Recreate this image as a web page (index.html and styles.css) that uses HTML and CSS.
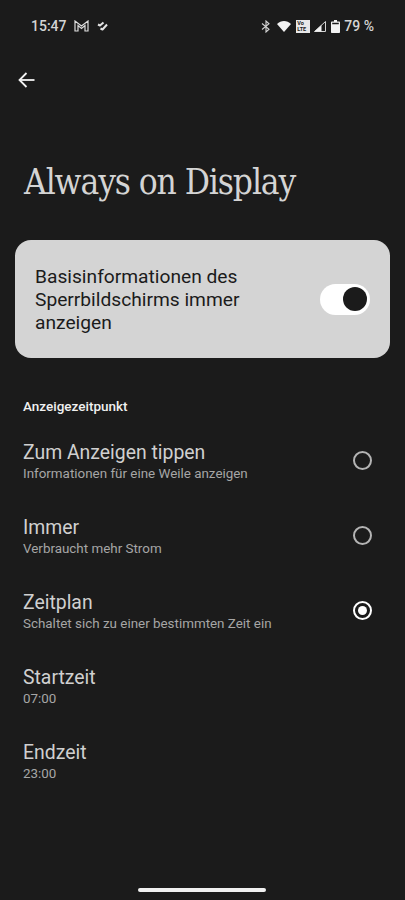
FILE: index.html
```html
<!DOCTYPE html>
<html lang="de">
<head>
<meta charset="UTF-8">
<meta name="viewport" content="width=device-width, initial-scale=1.0">
<title>Always on Display</title>
<link rel="stylesheet" href="styles.css">
</head>
<body>

<div class="status-bar">
    <div class="status-left">
        <span class="clock">15:47</span>
        <svg class="icon-gmail" width="15" height="12" viewBox="0 0 15 12" fill="none" stroke="#dedede" stroke-width="1.2">
            <path d="M1 11V1L7.500 6L14 1V11H11V5.500L7.500 8.500L4 5.500V11Z"/>
        </svg>
        <svg class="icon-tag" width="11" height="10" viewBox="0 0 11 10" fill="none" stroke="#e4e4e4" stroke-width="2" stroke-linejoin="round">
            <path d="M1 3.500L3 4.500L6.500 1.500"/>
            <path d="M3.500 7.500L5.500 8.500L10 3.500"/>
        </svg>
    </div>
    <div class="status-right">
        <svg class="icon-bt" width="10" height="13" viewBox="0 0 10 13" fill="none" stroke="#d4d4d4" stroke-width="1.1">
            <path d="M1 3.500L8 9.200L5 12V1L8 3.800L1 9.500"/>
        </svg>
        <svg class="icon-wifi" width="14" height="11" viewBox="0 0 14 11" fill="#f2f2f2">
            <path d="M0 3C4 -1 10 -1 14 3L7 11Z"/>
        </svg>
        <span class="volte">Vo<br>LTE</span>
        <svg class="icon-signal" width="12" height="11" viewBox="0 0 12 11" fill="none">
            <path d="M0.500 10.500L11.500 0.500V10.500Z" stroke="#d4d4d4" stroke-width="1"/>
            <path d="M0.500 10.500L7.500 4V10.500Z" fill="#f2f2f2"/>
        </svg>
        <svg class="icon-battery" width="9" height="13" viewBox="0 0 9 13" fill="#f2f2f2">
            <path d="M3 0H6V1.500H8C8.600 1.500 9 1.900 9 2.500V12C9 12.600 8.600 13 8 13H1C0.400 13 0 12.600 0 12V2.500C0 1.900 0.400 1.500 1 1.500H3ZM1.200 2.700V4.200H7.800V2.700Z" fill-rule="evenodd"/>
        </svg>
        <span class="battery">79 %</span>
    </div>
</div>

<div class="toolbar">
    <svg width="17" height="16" viewBox="0 0 17 16" fill="none" stroke="#f2f2f2" stroke-width="1.8">
        <path d="M16.500 8H2"/>
        <path d="M8.500 1L1.500 8L8.500 15"/>
    </svg>
</div>

<h1 class="page-title">Always on Display</h1>

<div class="main-card">
    <div class="main-card-text">Basisinformationen des Sperrbildschirms immer anzeigen</div>
    <div class="switch"><div class="switch-knob"></div></div>
</div>

<div class="section-label">Anzeigezeitpunkt</div>

<div class="row">
    <div class="row-text">
        <div class="row-title">Zum Anzeigen tippen</div>
        <div class="row-sub">Informationen für eine Weile anzeigen</div>
    </div>
    <div class="radio"></div>
</div>
<div class="row">
    <div class="row-text">
        <div class="row-title">Immer</div>
        <div class="row-sub">Verbraucht mehr Strom</div>
    </div>
    <div class="radio"></div>
</div>
<div class="row">
    <div class="row-text">
        <div class="row-title">Zeitplan</div>
        <div class="row-sub">Schaltet sich zu einer bestimmten Zeit ein</div>
    </div>
    <div class="radio selected"><div class="radio-dot"></div></div>
</div>
<div class="row">
    <div class="row-text">
        <div class="row-title">Startzeit</div>
        <div class="row-sub">07:00</div>
    </div>
</div>
<div class="row">
    <div class="row-text">
        <div class="row-title">Endzeit</div>
        <div class="row-sub">23:00</div>
    </div>
</div>

<div class="home-indicator"></div>

</body>
</html>
```

FILE: styles.css
```css
html, body {
    height: 100%;
}
body {
    background-color: #1b1b1b;
    color: #d4d4d4;
    font-family: Roboto, sans-serif;
    margin: 0;
    padding: 0;
    position: relative;
    overflow: hidden;
}
.status-bar {
    height: 52px;
    display: flex;
    justify-content: space-between;
    align-items: center;
    padding: 0 31px;
    box-sizing: border-box;
}
.status-left, .status-right {
    display: flex;
    align-items: center;
}
.clock {
    font-size: 14px;
    font-weight: 500;
    margin-right: 7px;
}
.icon-gmail {
    margin-right: 8px;
}
.icon-bt {
    margin-right: 6px;
}
.icon-wifi {
    margin-right: 5px;
}
.icon-signal {
    margin-right: 5px;
}
.icon-battery {
    margin-right: 4px;
}
.volte {
    background-color: #e8e8e8;
    color: #1b1b1b;
    width: 14px;
    height: 13px;
    font-size: 5.500px;
    line-height: 6px;
    font-weight: 700;
    padding-left: 1px;
    margin-right: 4px;
    box-sizing: border-box;
}
.battery {
    font-size: 14px;
    font-weight: 500;
}
.toolbar {
    height: 56px;
    display: flex;
    align-items: center;
    padding-left: 18px;
}
.page-title {
    font-family: "DejaVu Serif Condensed", "DejaVu Serif", serif;
    font-weight: 400;
    font-size: 35px;
    line-height: 48px;
    letter-spacing: -1.100px;
    color: #d4d4d4;
    margin: 50px 0 34px 24px;
}
.main-card {
    background-color: #d4d4d4;
    color: #1b1b1b;
    margin: 0 15px;
    height: 118px;
    border-radius: 16px;
    display: flex;
    align-items: center;
    justify-content: space-between;
    padding: 0 20px 0 20px;
}
.main-card-text {
    font-size: 19.200px;
    line-height: 23px;
    width: 240px;
}
.switch {
    background-color: #fff;
    width: 50px;
    height: 31px;
    border-radius: 16px;
    position: relative;
}
.switch-knob {
    background-color: #1b1b1b;
    width: 24px;
    height: 24px;
    border-radius: 50%;
    position: absolute;
    top: 3.500px;
    right: 3px;
}
.section-label {
    font-size: 13.500px;
    font-weight: 500;
    color: #f0f0f0;
    margin: 40px 0 9px 23px;
    line-height: 16px;
}
.row {
    height: 75px;
    display: flex;
    align-items: center;
    justify-content: space-between;
    padding: 0 33px 0 23px;
}
.row-text {
    padding-top: 2px;
}
.row-title {
    font-size: 19.400px;
    line-height: 26px;
    color: #d0d0d0;
}
.row-sub {
    font-size: 13.400px;
    line-height: 18px;
    margin-top: -1px;
    color: #a6a6a6;
}
.radio {
    width: 19px;
    height: 19px;
    border: 2px solid #b4b4b4;
    border-radius: 50%;
    box-sizing: border-box;
    display: flex;
    align-items: center;
    justify-content: center;
}
.radio.selected {
    border-color: #fff;
}
.radio-dot {
    width: 9px;
    height: 9px;
    border-radius: 50%;
    background-color: #fff;
}
.home-indicator {
    position: absolute;
    left: 138px;
    bottom: 8px;
    width: 128px;
    height: 4px;
    border-radius: 2px;
    background-color: #f0f0f0;
}
```
